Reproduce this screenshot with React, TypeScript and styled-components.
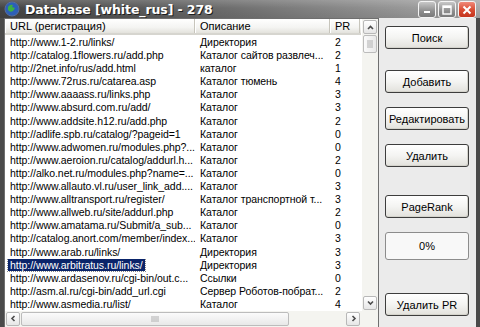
import React from 'react'
import styled, { createGlobalStyle, css } from 'styled-components'

const GlobalStyle = createGlobalStyle`
  html, body {
    margin: 0;
    padding: 0;
    background: #3f3f3f;
  }
`

const rows: [string, string, string][] = [
  ['http://www.1-2.ru/links/', 'Директория', '2'],
  ['http://catalog.1flowers.ru/add.php', 'Каталог сайтов развлеч...', '2'],
  ['http://2net.info/rus/add.html', 'каталог', '1'],
  ['http://www.72rus.ru/catarea.asp', 'Каталог тюмень', '4'],
  ['http://www.aaaass.ru/links.php', 'Каталог', '3'],
  ['http://www.absurd.com.ru/add/', 'Каталог', '3'],
  ['http://www.addsite.h12.ru/add.php', 'Каталог', '2'],
  ['http://adlife.spb.ru/catalog/?pageid=1', 'Каталог', '0'],
  ['http://www.adwomen.ru/modules.php?...', 'Каталог', '0'],
  ['http://www.aeroion.ru/catalog/addurl.h...', 'Каталог', '2'],
  ['http://alko.net.ru/modules.php?name=...', 'Каталог', '0'],
  ['http://www.allauto.vl.ru/user_link_add....', 'Каталог', '3'],
  ['http://www.alltransport.ru/register/', 'Каталог транспортной т...', '3'],
  ['http://www.allweb.ru/site/addurl.php', 'Каталог', '2'],
  ['http://www.amatama.ru/Submit/a_sub...', 'Каталог', '0'],
  ['http://catalog.anort.com/member/index...', 'Каталог', '3'],
  ['http://www.arab.ru/links/', 'Директория', '3'],
  ['http://www.arbitratus.ru/links/', 'Директория', '3'],
  ['http://www.ardasenov.ru/cgi-bin/out.c...', 'Ссылки', '0'],
  ['http://asm.al.ru/cgi-bin/add_url.cgi', 'Сервер Роботов-побрат...', '2'],
  ['http://www.asmedia.ru/list/', 'Каталог', '4']
]

const SELECTED = 17
const COLS = [190, 135, 30]

const Window = styled.div`
  width: 480px;
  height: 327px;
  display: flex;
  flex-direction: column;
  background: #4a4a4a;
  font-family: 'Liberation Sans', Arial, sans-serif;
  overflow: hidden;
`

const TitleBar = styled.div`
  height: 21px;
  display: flex;
  align-items: center;
  padding: 0 4px 0 4px;
  background:
    linear-gradient(180deg, rgba(255, 255, 255, 0.18) 0%, rgba(255, 255, 255, 0) 45%, rgba(0, 0, 0, 0.08) 100%),
    linear-gradient(90deg, #444 0%, #5a5a5a 30%, #878787 70%, #a9a9a9 100%);
`

const Title = styled.span`
  margin-left: 5px;
  flex: 1;
  color: #fff;
  font-family: 'DejaVu Sans', 'Liberation Sans', sans-serif;
  font-weight: bold;
  font-size: 12.5px;
  letter-spacing: -0.1px;
  text-shadow: 1px 1px 0 #1e1e1e;
  white-space: nowrap;
`

const Controls = styled.div`
  display: flex;
  gap: 2px;
  margin-top: 1px;
`

const CaptionButton = styled.div<{ $close?: boolean }>`
  width: 18px;
  height: 17px;
  border: 1px solid #f4f4f4;
  border-radius: 3px;
  display: flex;
  align-items: center;
  justify-content: center;
  box-sizing: border-box;
  ${({ $close }) =>
    $close
      ? css`
          background: linear-gradient(180deg, #f08a7a 0%, #d84a30 55%, #c4351e 100%);
        `
      : css`
          background: linear-gradient(180deg, #c8c8c8 0%, #8e8e8e 60%, #7a7a7a 100%);
        `}
`

const Frame = styled.div`
  flex: 1;
  display: flex;
  padding: 0 4px 6px 4px;
`

const Client = styled.div`
  flex: 1;
  display: flex;
  background: #ebebeb;
`

const ListFrame = styled.div`
  width: 375px;
  box-sizing: border-box;
  border: 1px solid #6f6f6f;
  background: #fff;
  display: grid;
  grid-template-columns: 1fr 17px;
  grid-template-rows: 1fr 16px;
`

const TableArea = styled.div`
  overflow: hidden;
  font-size: 11px;
  color: #000;
`

const Header = styled.div`
  display: flex;
  height: 16px;
  box-sizing: border-box;
  background: linear-gradient(180deg, #ffffff 0%, #f4f4f2 60%, #e3e2dc 100%);
  border-bottom: 2px solid #d6d5cf;
`

const HeaderCell = styled.div<{ $w: number }>`
  width: ${({ $w }) => $w}px;
  flex: none;
  box-sizing: border-box;
  padding: 1px 0 0 4px;
  border-right: 1px solid #c7c5bc;
  border-left: 1px solid #ffffff;
  white-space: nowrap;
  overflow: hidden;
  line-height: 13px;
`

const Rows = styled.div`
  padding-top: 1px;
`

const Row = styled.div`
  display: flex;
  height: 13.1px;
  line-height: 13px;
`

const Cell = styled.div<{ $w: number }>`
  width: ${({ $w }) => $w}px;
  flex: none;
  padding-left: 5px;
  padding-right: 2px;
  box-sizing: border-box;
  white-space: nowrap;
  overflow: hidden;
  font-size: 10.5px;
  letter-spacing: -0.05px;
`

const Selected = styled.span`
  background: #0a246a;
  color: #fff;
  outline: 1px dotted #8a8a8a;
  padding: 0 2px;
  margin-left: -2px;
`

const VScroll = styled.div`
  display: flex;
  flex-direction: column;
  padding: 1px;
  background: #f4f4f0;
  border-left: 1px solid #ffffff;
`

const HScroll = styled.div`
  display: flex;
  padding: 1px;
  background: #f4f4f0;
`

const Corner = styled.div`
  background: #f4f4f0;
`

const ArrowButton = styled.div`
  width: 14px;
  height: 14px;
  flex: none;
  box-sizing: border-box;
  border: 1px solid #b8b8b8;
  border-radius: 2px;
  background: linear-gradient(180deg, #ffffff 0%, #e6e6e6 100%);
  display: flex;
  align-items: center;
  justify-content: center;
`

const Track = styled.div`
  flex: 1;
  display: flex;
`

const Thumb = styled.div<{ $horizontal?: boolean }>`
  box-sizing: border-box;
  border: 1px solid #bcbcbc;
  border-radius: 2px;
  background: linear-gradient(${({ $horizontal }) => ($horizontal ? '180deg' : '90deg')}, #fbfbfb 0%, #e8e8e8 100%);
  display: flex;
  align-items: center;
  justify-content: center;
  ${({ $horizontal }) =>
    $horizontal
      ? css`
          width: 268px;
          height: 14px;
          margin-left: 1px;
        `
      : css`
          width: 14px;
          height: 18px;
          margin-top: 1px;
        `}
`

const SidePanel = styled.div`
  flex: 1;
  display: flex;
  flex-direction: column;
  align-items: center;
  padding-top: 8px;
  padding-right: 1px;
`

const Button = styled.div<{ $gap: number }>`
  margin-top: ${({ $gap }) => $gap}px;
  width: 84px;
  height: 23px;
  box-sizing: border-box;
  border: 1px solid #3d3d3d;
  border-radius: 3px;
  background: linear-gradient(180deg, #ffffff 0%, #f4f4f2 50%, #e2e1dc 100%);
  box-shadow: inset -1px -1px 0 #d4d3cc;
  display: flex;
  align-items: center;
  justify-content: center;
  font-size: 11px;
  color: #000;
`

const Progress = styled.div<{ $gap: number }>`
  margin-top: ${({ $gap }) => $gap}px;
  width: 84px;
  height: 28px;
  box-sizing: border-box;
  border: 1px solid #8c8c8c;
  border-radius: 3px;
  background: #f8f8f8;
  display: flex;
  align-items: center;
  justify-content: center;
  font-size: 11px;
  color: #000;
`

const Chevron = ({ dir }: { dir: 'up' | 'down' | 'left' | 'right' }) => {
  const d = {
    up: 'M2 6 L4.5 3.5 L7 6',
    down: 'M2 3.5 L4.5 6 L7 3.5',
    left: 'M5.5 2 L3 4.5 L5.5 7',
    right: 'M3.5 2 L6 4.5 L3.5 7'
  }[dir]
  return (
    <svg width="9" height="9" viewBox="0 0 9 9">
      <path d={d} fill="none" stroke="#4d4d4d" strokeWidth="1.6" />
    </svg>
  )
}

const Grip = ({ horizontal }: { horizontal?: boolean }) => (
  <svg width="8" height="8" viewBox="0 0 8 8">
    {[1, 3, 5, 7].map(p =>
      horizontal ? (
        <line key={p} x1={p} y1="1" x2={p} y2="7" stroke="#b0b0b0" strokeWidth="1" />
      ) : (
        <line key={p} x1="1" y1={p} x2="7" y2={p} stroke="#b0b0b0" strokeWidth="1" />
      )
    )}
  </svg>
)

const AppIcon = () => (
  <svg width="16" height="16" viewBox="0 0 16 16">
    <circle cx="8" cy="8" r="7" fill="#2c5fb8" stroke="#1a3a78" strokeWidth="1" />
    <path d="M4 6 Q6 3 9 4 L8 6 L11 7 L9 10 Q6 12 4 9 Z" fill="#3cb043" />
    <circle cx="8" cy="8" r="7" fill="none" stroke="#ffffff" strokeOpacity="0.35" strokeWidth="0.8" />
  </svg>
)

export default function App() {
  return (
    <Window>
      <GlobalStyle />
      <TitleBar>
        <AppIcon />
        <Title>Database [white_rus] - 278</Title>
        <Controls>
          <CaptionButton>
            <svg width="8" height="8" viewBox="0 0 8 8">
              <rect x="1" y="5" width="6" height="2" fill="#fff" />
            </svg>
          </CaptionButton>
          <CaptionButton>
            <svg width="10" height="10" viewBox="0 0 10 10">
              <rect x="1" y="1" width="8" height="8" fill="none" stroke="#fff" strokeWidth="1.4" />
              <rect x="1" y="1" width="8" height="2" fill="#fff" />
            </svg>
          </CaptionButton>
          <CaptionButton $close>
            <svg width="10" height="10" viewBox="0 0 10 10">
              <path d="M1.5 1.5 L8.5 8.5 M8.5 1.5 L1.5 8.5" stroke="#fff" strokeWidth="2" />
            </svg>
          </CaptionButton>
        </Controls>
      </TitleBar>
      <Frame>
        <Client>
          <ListFrame>
            <TableArea>
              <Header>
                <HeaderCell $w={COLS[0]}>URL (регистрация)</HeaderCell>
                <HeaderCell $w={COLS[1]}>Описание</HeaderCell>
                <HeaderCell $w={COLS[2]}>PR</HeaderCell>
              </Header>
              <Rows>
                {rows.map(([url, desc, pr], i) => (
                  <Row key={url}>
                    <Cell $w={COLS[0]}>{i === SELECTED ? <Selected>{url}</Selected> : url}</Cell>
                    <Cell $w={COLS[1]}>{desc}</Cell>
                    <Cell $w={COLS[2]}>{pr}</Cell>
                  </Row>
                ))}
              </Rows>
            </TableArea>
            <VScroll>
              <ArrowButton>
                <Chevron dir="up" />
              </ArrowButton>
              <Track>
                <Thumb>
                  <Grip />
                </Thumb>
              </Track>
              <ArrowButton>
                <Chevron dir="down" />
              </ArrowButton>
            </VScroll>
            <HScroll>
              <ArrowButton>
                <Chevron dir="left" />
              </ArrowButton>
              <Track>
                <Thumb $horizontal>
                  <Grip horizontal />
                </Thumb>
              </Track>
              <ArrowButton>
                <Chevron dir="right" />
              </ArrowButton>
            </HScroll>
            <Corner />
          </ListFrame>
          <SidePanel>
            <Button $gap={0}>Поиск</Button>
            <Button $gap={21}>Добавить</Button>
            <Button $gap={14}>Редактировать</Button>
            <Button $gap={14}>Удалить</Button>
            <Button $gap={28}>PageRank</Button>
            <Progress $gap={14}>0%</Progress>
            <Button $gap={33}>Удалить PR</Button>
          </SidePanel>
        </Client>
      </Frame>
    </Window>
  )
}
